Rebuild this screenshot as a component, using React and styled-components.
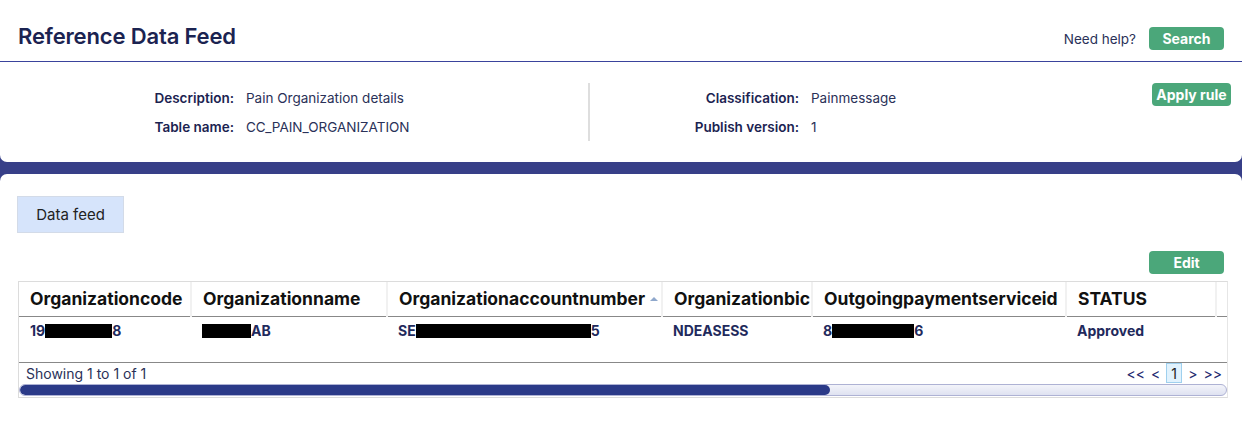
import React from "react";
import styled, { createGlobalStyle } from "styled-components";

const GlobalStyle = createGlobalStyle`
  body {
    margin: 0;
    background: #373f88;
    font-family: Inter, "Noto Sans", sans-serif;
    color: #1d2550;
  }
`;

const Page = styled.div`
  display: flex;
  flex-direction: column;
  gap: 12px;
  min-height: 433px;
`;

// ------------------------------------
const TopCard = styled.div`
  background: #fff;
  border-radius: 0 0 7px 7px;
`;
const Header = styled.div`
  height: 62px;
  box-sizing: border-box;
  padding: 11px 18px 0 18px;
  display: flex;
  align-items: center;
  justify-content: space-between;
  border-bottom: 1px solid #3a439c;
`;
const Title = styled.h1`
  margin: 0;
  font-size: 22px;
  font-weight: 600;
  color: #1b2351;
  letter-spacing: -0.15px;
`;
const HelpBox = styled.div`
  display: flex;
  align-items: center;
  gap: 13px;
  margin-top: 5px;
`;
const HelpText = styled.span`
  font-size: 13.5px;
  color: #2a3158;
`;
const Button = styled.button`
  background: #4ba77a;
  color: #fff;
  border: none;
  border-radius: 4px;
  font-family: Inter, sans-serif;
  font-weight: 700;
  font-size: 14px;
  height: 23px;
  width: ${(p) => p.w || 75}px;
  padding: 0;
  cursor: pointer;
`;

const Info = styled.div`
  height: 100px;
  box-sizing: border-box;
  padding: 21px 11px 0 0;
  display: flex;
  align-items: flex-start;
`;
const InfoGroup = styled.div`
  display: grid;
  grid-template-columns: ${(p) => p.label}px auto;
  column-gap: 12px;
  row-gap: 9px;
  width: ${(p) => p.width}px;
  padding-top: 5px;
  align-content: start;
`;
const Label = styled.div`
  text-align: right;
  font-weight: 600;
  font-size: 13.5px;
  line-height: 20px;
  color: #1b2351;
`;
const Value = styled.div`
  font-size: 13.5px;
  line-height: 20px;
  color: #2a3158;
`;
const Separator = styled.div`
  width: 2px;
  height: 58px;
  background: #dedede;
`;
const Spacer = styled.div`
  flex: 1;
`;

// -------------------------------------
const BottomCard = styled.div`
  flex: 1;
  background: #fff;
  border-radius: 7px 7px 0 0;
  padding: 22px 14px 20px 18px;
`;
const Tab = styled.div`
  width: 107px;
  height: 37px;
  box-sizing: border-box;
  margin-left: -1px;
  background: #d6e4fb;
  border: 1px solid #d3dbe8;
  display: flex;
  align-items: center;
  justify-content: center;
  font-size: 15px;
  color: #222;
`;
const Toolbar = styled.div`
  display: flex;
  justify-content: flex-end;
  margin: 18px 4px 7px 0;
`;

const TableBox = styled.div`
  border: 1px solid #dcdcdc;
  border-right: 1px solid #e6e6e6;
`;
const Scroll = styled.div`
  overflow: hidden;
`;
const Table = styled.table`
  border-collapse: collapse;
  table-layout: fixed;
  width: 1320px;
`;
const Th = styled.th`
  height: 34px;
  padding: 0 10px 0 11px;
  line-height: 22px;
  text-align: left;
  font-size: 17.5px;
  font-weight: 700;
  color: #111;
  white-space: nowrap;
  overflow: hidden;
  border-right: 2px solid #f1f1f1;
  border-bottom: 1px solid #888;
`;
const Td = styled.td`
  height: 40px;
  vertical-align: top;
  padding: 5px 11px 0;
  font-size: 14px;
  font-weight: 700;
  color: #1f2a5c;
  white-space: nowrap;
  border-bottom: 1px solid #888;
`;
const Redact = styled.span`
  display: inline-block;
  width: ${(p) => p.w}px;
  height: 14px;
  background: #000;
  vertical-align: -2px;
`;
const SortArrow = styled.span`
  display: inline-block;
  margin-left: 5px;
  width: 0;
  height: 0;
  border-left: 4px solid transparent;
  border-right: 4px solid transparent;
  border-bottom: 4px solid #8fa8cc;
  vertical-align: 4px;
`;
const Mark = styled.span`
  display: block;
  width: 3px;
  height: ${(p) => p.h}px;
  margin-top: ${(p) => p.top}px;
  background: #f3a04a;
  border-radius: 1px;
  opacity: ${(p) => p.o || 1};
`;

const Footer = styled.div`
  display: flex;
  justify-content: space-between;
  align-items: center;
  height: 20px;
  padding: 0 5px 0 7px;
  font-size: 14px;
  color: #2a3158;
`;
const Pager = styled.div`
  display: flex;
  align-items: center;
  gap: 6px;
  font-size: 14px;
  color: #1f2a70;
`;
const PageNum = styled.span`
  display: inline-flex;
  align-items: center;
  justify-content: center;
  width: 14px;
  height: 18px;
  background: #e1f2fd;
  border: 1px solid #9fd0ee;
  color: #222;
`;
const Track = styled.div`
  height: 10px;
  margin: 1px 0;
  border: 1px solid #aeb2d4;
  border-radius: 6px;
  background: linear-gradient(#f3f4fa, #dfe2f1);
  overflow: hidden;
`;
const Thumb = styled.div`
  height: 100%;
  background: #2b3a88;
  border-radius: 6px;
`;

const cols = [172, 196, 275, 150, 254, 150, 123];

const App = () => {
  return (
    <>
      <GlobalStyle />
      <Page>
        <TopCard>
          <Header>
            <Title>Reference Data Feed</Title>
            <HelpBox>
              <HelpText>Need help?</HelpText>
              <Button>Search</Button>
            </HelpBox>
          </Header>
          <Info>
            <InfoGroup label={234} width={588}>
              <Label>Description:</Label>
              <Value>Pain Organization details</Value>
              <Label>Table name:</Label>
              <Value>CC_PAIN_ORGANIZATION</Value>
            </InfoGroup>
            <Separator />
            <InfoGroup label={209} width={400}>
              <Label>Classification:</Label>
              <Value>Painmessage</Value>
              <Label>Publish version:</Label>
              <Value>1</Value>
            </InfoGroup>
            <Spacer />
            <Button w={79}>Apply rule</Button>
          </Info>
        </TopCard>
        <BottomCard>
          <Tab>Data feed</Tab>
          <Toolbar>
            <Button>Edit</Button>
          </Toolbar>
          <TableBox>
            <Scroll>
              <Table>
                <colgroup>
                  {cols.map((w, i) => (
                    <col key={i} style={{ width: w }} />
                  ))}
                </colgroup>
                <thead>
                  <tr>
                    <Th>Organizationcode</Th>
                    <Th>Organizationname</Th>
                    <Th>
                      Organizationaccountnumber
                      <SortArrow />
                    </Th>
                    <Th>Organizationbic</Th>
                    <Th>Outgoingpaymentserviceid</Th>
                    <Th>STATUS</Th>
                    <Th>
                      <Mark h={2} top={4} o={0.7} />
                    </Th>
                  </tr>
                </thead>
                <tbody>
                  <tr>
                    <Td>
                      19<Redact w={67} />8
                    </Td>
                    <Td>
                      <Redact w={49} />AB
                    </Td>
                    <Td>
                      SE<Redact w={175} />5
                    </Td>
                    <Td>NDEASESS</Td>
                    <Td>
                      8<Redact w={82} />6
                    </Td>
                    <Td>Approved</Td>
                    <Td>
                      <Mark h={3} top={4} o={0.5} />
                      <Mark h={7} top={10} />
                    </Td>
                  </tr>
                </tbody>
              </Table>
            </Scroll>
            <Footer>
              <span>Showing 1 to 1 of 1</span>
              <Pager>
                <span>&lt;&lt;</span>
                <span>&lt;</span>
                <PageNum>1</PageNum>
                <span>&gt;</span>
                <span>&gt;&gt;</span>
              </Pager>
            </Footer>
            <Track>
              <Thumb style={{ width: `${(812 / 1209) * 100}%` }} />
            </Track>
          </TableBox>
        </BottomCard>
      </Page>
    </>
  );
};

export default App;
